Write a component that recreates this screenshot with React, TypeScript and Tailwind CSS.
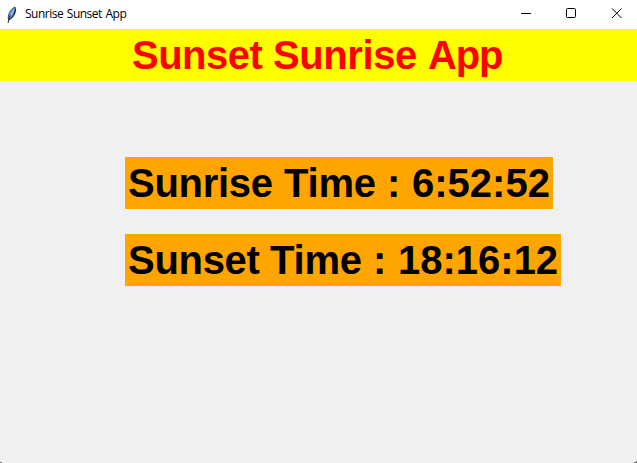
export default function App() {
  return (
    <div className="relative flex h-[463px] w-[637px] flex-col overflow-hidden bg-[#f0f0f0] font-['Liberation_Sans',Arial,sans-serif]">
      <header className="flex h-[29px] shrink-0 items-center bg-white">
        <svg className="ml-[4px] h-5 w-4" viewBox="0 0 16 20" fill="none">
          <path d="M4.500 14.500C3.500 10 6 4.500 11 2C12.500 6 10.500 11.500 6 14.500Z" fill="#5da0e8" stroke="#26374a" strokeWidth=".9" />
          <path d="M6.500 13.500C9.500 11 11 8 11.300 3.500" stroke="#111820" strokeWidth=".9" />
          <path d="M4 18L5.200 13L7 9.500" stroke="#222" strokeWidth="1" />
          <path d="M6.500 10.500L10 4.500" stroke="#a9d2f5" strokeWidth=".9" />
        </svg>
        <span className="ml-[5px] flex-1 whitespace-nowrap pb-[2px] font-['Open_Sans',sans-serif] text-[12px] tracking-[-0.5px] text-black [word-spacing:1px]">Sunrise Sunset App</span>
        <svg className="h-[29px] w-[137px]" viewBox="0 0 137 29" fill="none" stroke="#000" strokeWidth="1">
          <path d="M21 13.500H31" />
          <rect x="66.500" y="8.500" width="9" height="9" rx="1" />
          <path d="M112 8.500L121.500 18M121.500 8.500L112 18" />
        </svg>
      </header>
      <h1 className="flex h-[52px] shrink-0 items-center whitespace-pre bg-[#ffff00] pl-[132px] text-[40px] font-bold leading-none text-[#ff0000]">
        <span className="w-[141px] tracking-[-0.5px]">Sunset </span>
        <span className="w-[155px] tracking-[-0.4px]">Sunrise </span>
        <span className="tracking-[-1.1px]">App</span>
      </h1>
      <main className="flex flex-col items-start gap-[25px] pl-[125px] pt-[76px]">
        <div className="flex h-[52px] w-[428px] items-center whitespace-pre bg-[#ffa500] pl-[3px] text-[40px] font-bold leading-none text-black">
          <span className="w-[156px] tracking-[-0.3px]">Sunrise </span>
          <span className="w-[103px] tracking-[-0.2px]">Time </span>
          <span className="w-[25px]">: </span>
          <span>6:52:52</span>
        </div>
        <div className="flex h-[52px] w-[436px] items-center whitespace-pre bg-[#ffa500] pl-[3px] text-[40px] font-bold leading-none text-black">
          <span className="w-[142px] tracking-[-0.3px]">Sunset </span>
          <span className="w-[103px] tracking-[-0.2px]">Time </span>
          <span className="w-[25px]">: </span>
          <span>18:16:12</span>
        </div>
      </main>
      <div className="absolute bottom-0 left-0 h-px w-[2px] bg-[#777777]" />
      <div className="absolute bottom-0 right-0 h-px w-[3px] bg-[#777777]" />
      <div className="absolute bottom-px right-0 h-px w-px bg-[#666666]" />
    </div>
  );
}
